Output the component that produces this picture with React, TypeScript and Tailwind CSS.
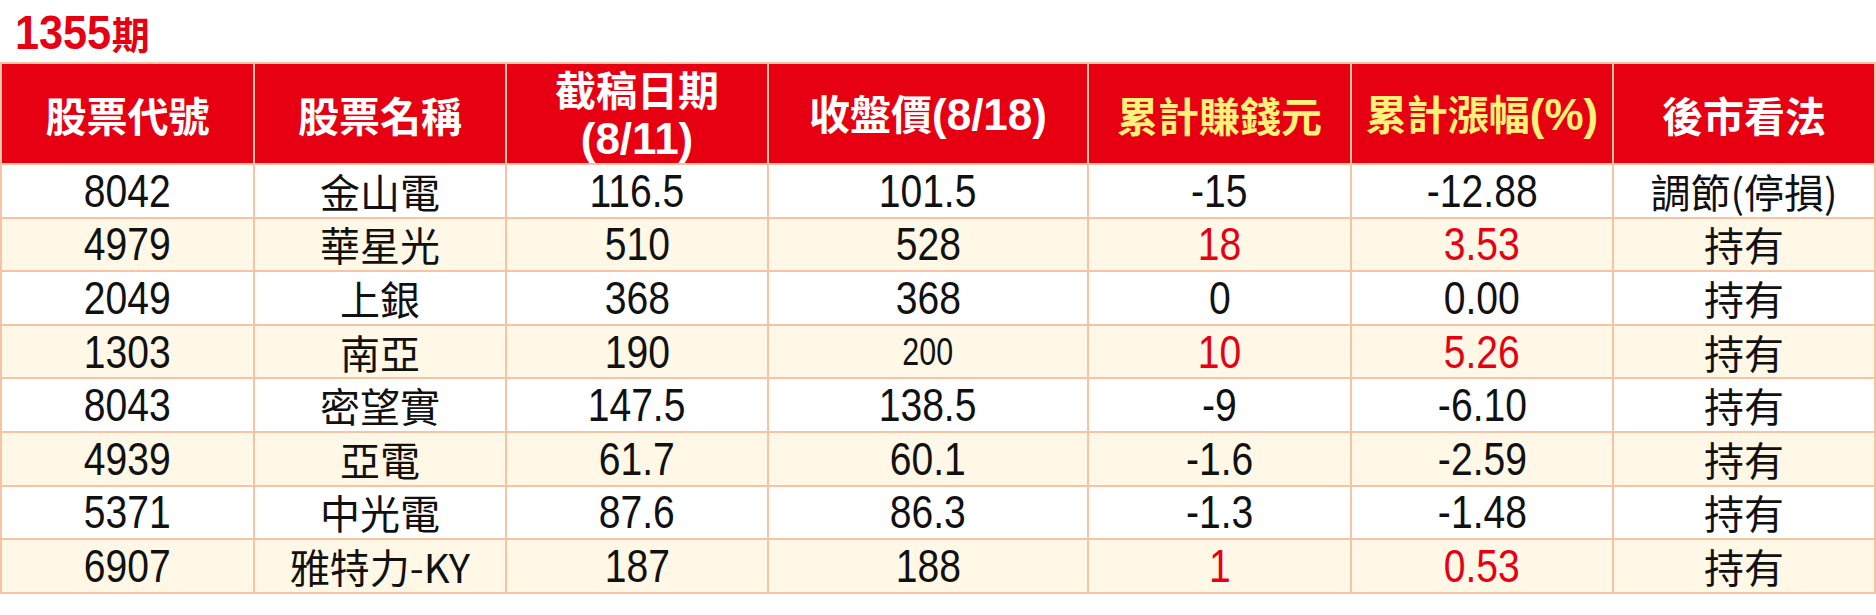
import React from "react";

type Row = {
  code: string;
  name: string;
  base: string;
  close: string;
  gain: string;
  pct: string;
  view: string;
  up?: boolean;
};

const rows: Row[] = [
  { code: "8042", name: "金山電", base: "116.5", close: "101.5", gain: "-15", pct: "-12.88", view: "調節(停損)" },
  { code: "4979", name: "華星光", base: "510", close: "528", gain: "18", pct: "3.53", view: "持有", up: true },
  { code: "2049", name: "上銀", base: "368", close: "368", gain: "0", pct: "0.00", view: "持有" },
  { code: "1303", name: "南亞", base: "190", close: "200", gain: "10", pct: "5.26", view: "持有", up: true },
  { code: "8043", name: "密望實", base: "147.5", close: "138.5", gain: "-9", pct: "-6.10", view: "持有" },
  { code: "4939", name: "亞電", base: "61.7", close: "60.1", gain: "-1.6", pct: "-2.59", view: "持有" },
  { code: "5371", name: "中光電", base: "87.6", close: "86.3", gain: "-1.3", pct: "-1.48", view: "持有" },
  { code: "6907", name: "雅特力-KY", base: "187", close: "188", gain: "1", pct: "0.53", view: "持有", up: true },
];

// condensed digits: Liberation Sans squeezed a bit to match the narrow print face
const Num: React.FC<{ v: string; small?: boolean }> = ({ v, small }) => (
  <span
    className={`inline-block font-['Liberation_Sans',sans-serif] leading-[40px] ${
      small ? "text-[38px] scale-x-[0.8]" : "text-[46px] scale-x-[0.85]"
    }`}
  >
    {v}
  </span>
);

// latin part of a header label, a touch larger than the CJK
const Lat: React.FC<{ children: React.ReactNode }> = ({ children }) => (
  <span className="text-[44px] font-['Liberation_Sans',sans-serif]">{children}</span>
);

const headers: { key: string; y: boolean; node: React.ReactNode }[] = [
  { key: "code", y: false, node: "股票代號" },
  { key: "name", y: false, node: "股票名稱" },
  {
    key: "base",
    y: false,
    node: (
      <>
        截稿日期
        <br />
        <Lat>(8/11)</Lat>
      </>
    ),
  },
  {
    key: "close",
    y: false,
    node: (
      <>
        收盤價<Lat>(8/18)</Lat>
      </>
    ),
  },
  { key: "gain", y: true, node: "累計賺錢元" },
  {
    key: "pct",
    y: true,
    node: (
      <>
        累計漲幅<Lat>(%)</Lat>
      </>
    ),
  },
  { key: "view", y: false, node: "後市看法" },
];

const App: React.FC = () => {
  return (
    <div className="w-[1876px] h-[615px] bg-white font-['Noto_Sans_CJK_TC',sans-serif]">
      {/* TITLE */}
      <div className="h-[62px] pl-[15px] flex items-end pb-[8px] font-bold text-[#e60012]">
        <span className="inline-block origin-left scale-x-[0.9] text-[48px] leading-[42px] font-['Liberation_Sans',sans-serif] -mr-[10px]">
          1355
        </span>
        <span className="text-[38px] leading-[42px]">期</span>
      </div>

      {/* TABLE */}
      <div className="grid grid-cols-[251px_250px_260px_318px_261px_260px_260px] gap-[2px] bg-[#f6c3a5] p-[2px]">
        {headers.map((h) => (
          <div
            key={h.key}
            className={`h-[99px] bg-[#e60012] flex items-center justify-center text-center font-bold text-[41px] leading-[48px] ${
              h.y ? "text-[#fff27a]" : "text-white"
            }`}
          >
            <div>{h.node}</div>
          </div>
        ))}

        {rows.map((r, i) => {
          const bg = i % 2 === 1 ? "bg-[#fff8e6]" : "bg-white";
          const cell = `h-[51.6px] ${bg} flex items-center justify-center text-[#111]`;
          const red = r.up ? "text-[#e60012]" : "";
          return (
            <React.Fragment key={r.code}>
              <div className={cell}>
                <Num v={r.code} />
              </div>
              <div className={`${cell} text-[40px] leading-[44px]`}>{r.name}</div>
              <div className={cell}>
                <Num v={r.base} />
              </div>
              <div className={cell}>
                <Num v={r.close} small={r.close === "200"} />
              </div>
              <div className={`${cell} ${red}`}>
                <Num v={r.gain} />
              </div>
              <div className={`${cell} ${red}`}>
                <Num v={r.pct} />
              </div>
              <div className={`${cell} text-[40px] leading-[44px]`}>{r.view}</div>
            </React.Fragment>
          );
        })}
      </div>
    </div>
  );
};

export default App;
